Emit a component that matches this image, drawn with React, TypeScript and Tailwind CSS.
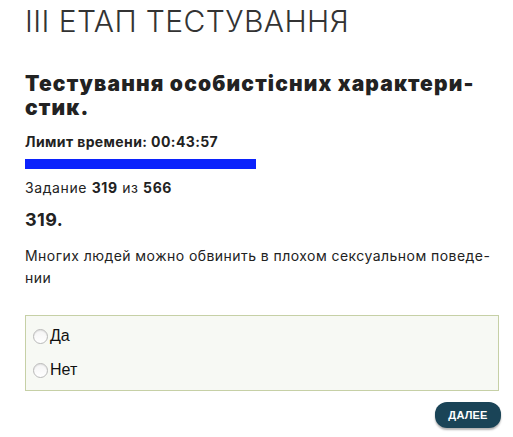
import React from "react";

export default function App() {
  return (
    <div className="w-[513px] h-[437px] bg-white text-[#222] px-[25px] overflow-hidden" style={{ fontFamily: "Inter, 'Noto Sans', sans-serif" }}>
      <h1 className="pt-[3px] text-[30px] leading-[36px] font-light text-[#333] tracking-[0.4px] whitespace-nowrap">III ЕТАП ТЕСТУВАННЯ</h1>
      <h2 className="mt-[33px] text-[21px] leading-[24px] font-black text-[#222] tracking-[1.15px] whitespace-nowrap">
        Тестування особистісних характери-<br />стик.
      </h2>
      <div className="mt-[12px] text-[14px] leading-[20px] font-bold tracking-[0.4px] whitespace-nowrap">Лимит времени: 00:43:57</div>
      <div className="mt-[7px] h-[10px] w-[231px] bg-[#0b22fc]" />
      <div className="mt-[9px] text-[14px] leading-[20px] tracking-[0.6px] whitespace-nowrap">
        Задание <span className="font-bold">319</span> из <span className="font-bold">566</span>
      </div>
      <div className="mt-[10px] text-[18px] leading-[24px] font-bold tracking-[0.4px]">319.</div>
      <p className="mt-[13px] text-[14px] leading-[22px] tracking-[0.45px] whitespace-nowrap">
        Многих людей можно обвинить в плохом сексуальном поведе-<br />нии
      </p>
      <div className="mt-[26px] w-[474px] border border-[#c6d0a6] bg-[#f7f9f4] py-[3px] px-[7px]" style={{ fontFamily: "'Liberation Sans', Arial, sans-serif" }}>
        {["Да", "Нет"].map((t) => (
          <label key={t} className="flex h-[34px] items-center gap-[2px] text-[16px] text-[#111]">
            <span className="w-[15px] h-[15px] rounded-full border border-[#b9b9b9] bg-gradient-to-b from-[#f4f4f4] to-white shadow-[inset_0_1px_1px_rgba(0,0,0,0.08)]" />
            <span>{t}</span>
          </label>
        ))}
      </div>
      <div className="mt-[11px] flex w-[476px] justify-end">
        <button className="h-[26px] w-[66px] rounded-[12px] bg-[#1a4457] text-white text-[11px] font-extrabold tracking-[0.2px] shadow-[0_2px_2px_rgba(0,0,0,0.3)]" style={{ fontFamily: "'Liberation Sans', Arial, sans-serif" }}>
          ДАЛЕЕ
        </button>
      </div>
    </div>
  );
}
